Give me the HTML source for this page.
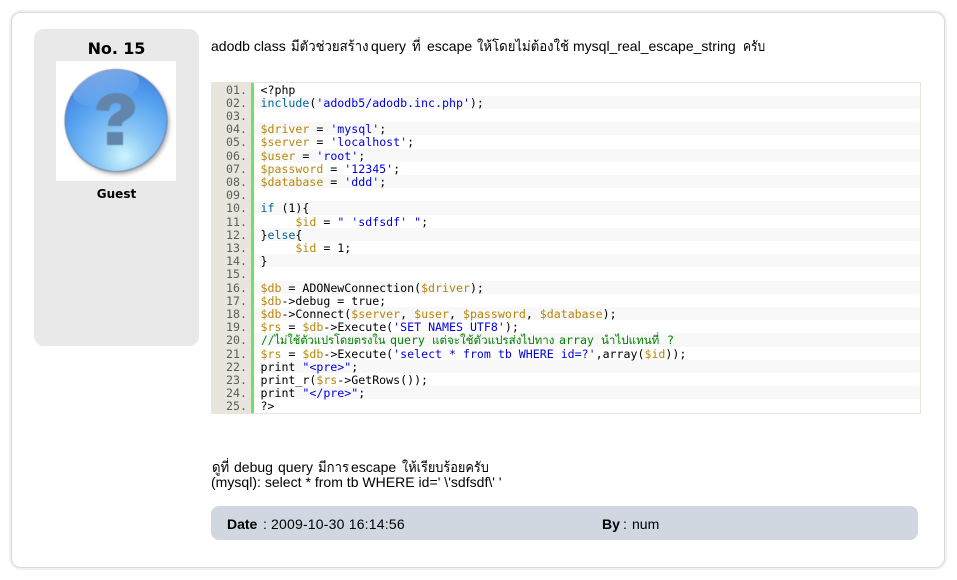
<!DOCTYPE html>
<html><head><meta charset="utf-8">
<style>
html,body{margin:0;padding:0;background:#fff;width:957px;height:580px;overflow:hidden}
body{font-family:"Liberation Sans","Noto Sans CJK SC",sans-serif;color:#000;position:relative}
.a{position:absolute}
#card{left:11px;top:12px;width:932px;height:554px;border:1px solid #d9d9d9;border-radius:10px;box-shadow:0 0 0 2px #f1f1f1;box-sizing:content-box;background:#fff}
#side{left:34px;top:29px;width:165px;height:317px;background:#e9e9e9;border-radius:10px}
#no{left:34px;top:39px;width:165px;text-align:center;font:bold 16px "DejaVu Sans",sans-serif;line-height:20px;letter-spacing:-.1px}
#img{left:56px;top:61px;width:120px;height:120px;background:#fff}
#guest{left:34px;top:186px;width:165px;text-align:center;font:bold 12px "DejaVu Sans",sans-serif;line-height:16px}
.t{font-size:14px;line-height:15px;white-space:nowrap}
.th{display:inline-block;transform:scaleX(.94);transform-origin:0 50%}
#code{left:211px;top:82px;width:710px;height:332px;box-sizing:border-box;border:1px solid #e7e5dc;border-left:0;background:#fff;overflow:hidden}
#gut{left:0;top:0;width:40px;height:330px;background:#e7e5dc}
#bar{left:40px;top:0;width:3px;height:330px;background:#6ce26c}
.r{position:absolute;left:43px;right:0;height:13px;font:11.6px/14px "DejaVu Sans Mono","Noto Sans CJK SC",monospace;white-space:pre;color:#000}
.r i{font-style:normal}
.r b{font-weight:normal;position:absolute;left:-43px;width:36px;text-align:right;color:#5c5c5c;z-index:1}
.r u{text-decoration:none;position:absolute;left:6.5px;z-index:1}
.r u.p{position:absolute;top:0}
.e{background:#f8f8f8}
.v{color:#b8860b}.s{color:#0000e6}.k{color:#069}.c{color:#008200}
#foot{left:211px;top:506px;width:707px;height:34px;background:#d0d7e1;border-radius:8px}
</style></head>
<body>
<div class="a" id="card"></div>
<div class="a" id="side"></div>
<div class="a" id="no">No. 15</div>
<div class="a" id="img">
<svg width="120" height="120" viewBox="0 0 120 120">
<defs>
<radialGradient id="g" cx="58%" cy="85%" r="85%">
<stop offset="0" stop-color="#ccf4fa"/><stop offset=".3" stop-color="#8cc8f6"/><stop offset=".7" stop-color="#55a0f0"/><stop offset="1" stop-color="#3f82dc"/>
</radialGradient>
<linearGradient id="h" x1="0" y1="0" x2="0" y2="1"><stop offset="0" stop-color="#fff" stop-opacity=".3"/><stop offset="1" stop-color="#fff" stop-opacity=".02"/></linearGradient>
<filter id="b" x="-20%" y="-20%" width="140%" height="140%"><feGaussianBlur stdDeviation="2"/></filter>
<filter id="b2"><feGaussianBlur stdDeviation=".6"/></filter>
</defs>
<circle cx="62" cy="62" r="51" fill="#555" opacity=".5" filter="url(#b)"/>
<circle cx="60" cy="59.5" r="51" fill="url(#g)" stroke="#5a6c9c" stroke-width=".8" filter="url(#b2)"/>
<ellipse cx="50" cy="27" rx="34" ry="17" transform="rotate(-14 50 27)" fill="url(#h)"/>
<path d="M40 49C41 38 50 32 60 32C71 32 79 38 79 47C79 53 75 56 70 59C67 61 66 62 66 65H52C52 59 54 56 58 53C63 50 65 49 65 46C65 43 63 42 60 42C56 42 54 44 53 50ZM51 71H67V84H51Z" fill="#6285ab" filter="url(#b2)"/>
</svg>
</div>
<div class="a" id="guest">Guest</div>

<div class="a t" style="left:211px;top:39px">adodb class</div>
<div class="a t th" style="left:291px;top:39px">มีตัวช่วยสร้าง</div>
<div class="a t" style="left:371px;top:39px">query</div>
<div class="a t th" style="left:412px;top:39px">ที่</div>
<div class="a t" style="left:427px;top:39px">escape</div>
<div class="a t th" style="left:477px;top:39px">ให้โดยไม่ต้องใช้</div>
<div class="a t" style="left:573px;top:39px">mysql_real_escape_string</div>
<div class="a t th" style="left:743px;top:39px;transform:scaleX(.86)">ครับ</div>

<div class="a" id="code">
<div class="a" id="gut"></div>
<div class="a" id="bar"></div>
<div class="r" style="top:0px"><b>01.</b><u>&lt;?php</u></div>
<div class="r e" style="top:13px"><b>02.</b><u><i class="k">include</i>(<i class="s">'adodb5/adodb.inc.php'</i>);</u></div>
<div class="r" style="top:26px"><b>03.</b></div>
<div class="r e" style="top:39px"><b>04.</b><u><i class="v">$driver</i> = <i class="s">'mysql'</i>;</u></div>
<div class="r" style="top:52px"><b>05.</b><u><i class="v">$server</i> = <i class="s">'localhost'</i>;</u></div>
<div class="r e" style="top:66px"><b>06.</b><u><i class="v">$user</i> = <i class="s">'root'</i>;</u></div>
<div class="r" style="top:79px"><b>07.</b><u><i class="v">$password</i> = <i class="s">'12345'</i>;</u></div>
<div class="r e" style="top:92px"><b>08.</b><u><i class="v">$database</i> = <i class="s">'ddd'</i>;</u></div>
<div class="r" style="top:105px"><b>09.</b></div>
<div class="r e" style="top:118px;height:14px"><b>10.</b><u><i class="k">if</i> (1){</u></div>
<div class="r" style="top:132px"><b>11.</b><u>     <i class="v">$id</i> = <i class="s">" 'sdfsdf' "</i>;</u></div>
<div class="r e" style="top:145px"><b>12.</b><u>}<i class="k">else</i>{</u></div>
<div class="r" style="top:158px"><b>13.</b><u>     <i class="v">$id</i> = 1;</u></div>
<div class="r e" style="top:171px"><b>14.</b><u>}</u></div>
<div class="r" style="top:184px"><b>15.</b></div>
<div class="r e" style="top:198px"><b>16.</b><u><i class="v">$db</i> = ADONewConnection(<i class="v">$driver</i>);</u></div>
<div class="r" style="top:211px"><b>17.</b><u><i class="v">$db</i>-&gt;debug = true;</u></div>
<div class="r e" style="top:224px"><b>18.</b><u><i class="v">$db</i>-&gt;Connect(<i class="v">$server</i>, <i class="v">$user</i>, <i class="v">$password</i>, <i class="v">$database</i>);</u></div>
<div class="r" style="top:237px"><b>19.</b><u><i class="v">$rs</i> = <i class="v">$db</i>-&gt;Execute(<i class="s">'SET NAMES UTF8'</i>);</u></div>
<div class="r e c" style="top:250px;height:14px"><b>20.</b><u style="transform:scaleX(.96);transform-origin:0 50%">//ไม่ใช้ตัวแปรโดยตรงใน</u><u class="p" style="left:136px">query</u><u class="p" style="left:178px">แต่จะใช้ตัวแปรส่งไปทาง</u><u class="p" style="left:305px">array</u><u class="p" style="left:347px">นำไปแทนที่</u><u class="p" style="left:413px">?</u></div>
<div class="r" style="top:264px"><b>21.</b><u><i class="v">$rs</i> = <i class="v">$db</i>-&gt;Execute(<i class="s">'select * from tb WHERE id=?'</i>,array(<i class="v">$id</i>));</u></div>
<div class="r e" style="top:277px"><b>22.</b><u>print <i class="s">"&lt;pre&gt;"</i>;</u></div>
<div class="r" style="top:290px"><b>23.</b><u>print_r(<i class="v">$rs</i>-&gt;GetRows());</u></div>
<div class="r e" style="top:303px"><b>24.</b><u>print <i class="s">"&lt;/pre&gt;"</i>;</u></div>
<div class="r" style="top:316px"><b>25.</b><u>?&gt;</u></div>
</div>

<div class="a t th" style="left:212px;top:460px">ดูที่</div>
<div class="a t" style="left:234px;top:460px">debug</div>
<div class="a t" style="left:278px;top:460px">query</div>
<div class="a t th" style="left:318px;top:460px">มีการ</div>
<div class="a t" style="left:351px;top:460px">escape</div>
<div class="a t th" style="left:402px;top:460px;transform:scaleX(.91)">ให้เรียบร้อยครับ</div>
<div class="a t" style="left:211px;top:475px;letter-spacing:.02px">(mysql): select * from tb WHERE id=' \'sdfsdf\' '</div>

<div class="a" id="foot"></div>
<div class="a t" style="left:227px;top:517px"><b>Date</b></div>
<div class="a t" style="left:263px;top:517px">:</div>
<div class="a t" style="left:271px;top:517px;letter-spacing:.2px">2009-10-30 16:14:56</div>
<div class="a t" style="left:602px;top:517px"><b>By</b></div>
<div class="a t" style="left:623px;top:517px">:</div>
<div class="a t" style="left:632px;top:517px">num</div>
</body></html>
